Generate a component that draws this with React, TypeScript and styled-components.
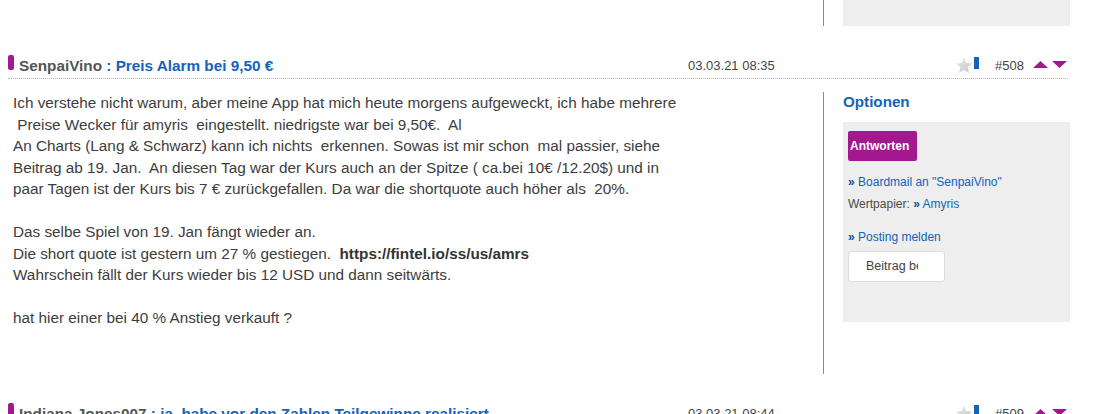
import styled, { createGlobalStyle } from "styled-components"

const GlobalStyle = createGlobalStyle`
    body {
        margin: 0;
        background: #fff;
        font-family: "Liberation Sans", Arial, sans-serif;
        color: #3a3a3a;
    }
`

const BLUE = '#1462b9'
const PURPLE = '#a3188f'

const Star = () => (
    <svg width="18" height="17" viewBox="0 0 17 16">
        <defs>
            <linearGradient id="starFill" x1="0" y1="0" x2="1" y2="1">
                <stop offset="0" stopColor="#ececec" />
                <stop offset="1" stopColor="#c4c4c4" />
            </linearGradient>
        </defs>
        <polygon
            points="8.5,0.5 10.6,5.6 16.2,6 11.9,9.6 13.3,15.2 8.5,12.2 3.7,15.2 5.1,9.6 0.8,6 6.4,5.6"
            fill="url(#starFill)"
        />
    </svg>
)

const Triangle = ({ down }: { down?: boolean }) => (
    <svg width="15" height="7" viewBox="0 0 15 7">
        <polygon points={down ? "0,0 15,0 7.5,7" : "0,7 15,7 7.5,0"} fill={PURPLE} />
    </svg>
)

type PostHeaderProps = {
    author: string
    subject: string
    date: string
    num: number
}

const PostHeader = ({ author, subject, date, num }: PostHeaderProps) => (
    <Header>
        <Title>
            <Marker />
            <Author>{author}</Author>
            <Subject>&nbsp;: {subject}</Subject>
        </Title>
        <DateCell>{date}</DateCell>
        <Tools>
            <StarWrap><Star /></StarWrap>
            <BlueBar />
            <PostNum>#{num}</PostNum>
            <Arrows>
                <Triangle />
                <Triangle down />
            </Arrows>
        </Tools>
    </Header>
)

const postText = `Ich verstehe nicht warum, aber meine App hat mich heute morgens aufgeweckt, ich habe mehrere
 Preise Wecker für amyris  eingestellt. niedrigste war bei 9,50€.  Al
An Charts (Lang & Schwarz) kann ich nichts  erkennen. Sowas ist mir schon  mal passier, siehe
Beitrag ab 19. Jan.  An diesen Tag war der Kurs auch an der Spitze ( ca.bei 10€ /12.20$) und in
paar Tagen ist der Kurs bis 7 € zurückgefallen. Da war die shortquote auch höher als  20%.

Das selbe Spiel von 19. Jan fängt wieder an.
Die short quote ist gestern um 27 % gestiegen.  `

const postTextEnd = `
Wahrschein fällt der Kurs wieder bis 12 USD und dann seitwärts.

hat hier einer bei 40 % Anstieg verkauft ?`

export default function App() {
    return (
        <>
            <GlobalStyle />
            <Page>
                <Body $tail>
                    <Main />
                    <Side>
                        <OptionsBox $tail />
                    </Side>
                </Body>

                <Post>
                    <PostHeader author="SenpaiVino" subject="Preis Alarm bei 9,50 €" date="03.03.21 08:35" num={508} />
                    <Body>
                        <Main>
                            {postText}
                            <strong>https://fintel.io/ss/us/amrs</strong>
                            {postTextEnd}
                        </Main>
                        <Side>
                            <SideTitle>Optionen</SideTitle>
                            <OptionsBox>
                                <ReplyButton>Antworten</ReplyButton>
                                <OptionLine $gap={13}>
                                    <Raquo>»</Raquo> <Link>Boardmail an "SenpaiVino"</Link>
                                </OptionLine>
                                <OptionLine $gap={6}>
                                    Wertpapier: <Raquo>»</Raquo> <Link>Amyris</Link>
                                </OptionLine>
                                <OptionLine $gap={17}>
                                    <Raquo>»</Raquo> <Link>Posting melden</Link>
                                </OptionLine>
                                <EditButton>
                                    <EditLabel>Beitrag bearbeiten</EditLabel>
                                </EditButton>
                            </OptionsBox>
                        </Side>
                    </Body>
                </Post>

                <Post>
                    <PostHeader author="Indiana Jones007" subject="ja, habe vor den Zahlen Teilgewinne realisiert" date="03.03.21 08:44" num={509} />
                    <Body>
                        <Main />
                        <Side />
                    </Body>
                </Post>
            </Page>
        </>
    )
}

export const Page = styled.div`
    width: 1062px;
    margin-left: 8px;
`
export const Post = styled.div`
    margin-top: 29px;
`
export const Header = styled.div`
    display: flex;
    align-items: flex-start;
    width: 1060px;
    height: 22px;
    line-height: 22px;
    padding-bottom: 1px;
    border-bottom: 1px dotted #b8b8b8;
`
export const Title = styled.div`
    display: flex;
    align-items: flex-start;
    width: 680px;
    font-size: 15.3px;
    font-weight: bold;
    white-space: nowrap;
    overflow: hidden;
`
export const Marker = styled.span`
    width: 6px;
    height: 15px;
    border-radius: 2px;
    background: ${PURPLE};
    margin-right: 5px;
`
export const Author = styled.span`
    color: #555;
`
export const Subject = styled.span`
    color: ${BLUE};
`
export const DateCell = styled.div`
    flex: 1;
    font-size: 13px;
    color: #444;
`
export const Tools = styled.div`
    display: flex;
    align-items: flex-start;
    height: 22px;
    font-size: 13px;
    line-height: 22px;
    color: #444;
    margin-right: 1px;
`
export const StarWrap = styled.span`
    display: flex;
    margin-top: 2px;
`
export const BlueBar = styled.span`
    width: 5px;
    height: 12px;
    margin: 2px 0 0 1px;
    background: ${BLUE};
`
export const PostNum = styled.span`
    margin-left: 16px;
`
export const Arrows = styled.span`
    display: flex;
    gap: 4px;
    margin: 6px 0 0 9px;
`
export const Body = styled.div<{ $tail?: boolean }>`
    display: flex;
    height: ${p => p.$tail ? 26 : 282}px;
    margin-top: ${p => p.$tail ? 0 : 13}px;
`
export const Main = styled.div`
    width: 810px;
    padding-left: 5px;
    font-size: 15.3px;
    line-height: 21.5px;
    white-space: pre-wrap;
    color: #3d3d3d;
    strong {
        color: #333;
    }
`
export const Side = styled.div`
    width: 227px;
    padding-left: 19px;
    border-left: 1px solid #8a8a8a;
`
export const SideTitle = styled.div`
    font-size: 15.2px;
    font-weight: bold;
    line-height: 20px;
    color: ${BLUE};
`
export const OptionsBox = styled.div<{ $tail?: boolean }>`
    display: flex;
    flex-direction: column;
    align-items: flex-start;
    box-sizing: border-box;
    height: ${p => p.$tail ? 26 : 200}px;
    margin-top: ${p => p.$tail ? 0 : 10}px;
    padding: 9px 5px;
    background: #eeeeee;
`
export const ReplyButton = styled.button`
    width: 69px;
    height: 30px;
    padding: 0 0 0 2px;
    border: 0;
    border-radius: 2px;
    background: ${PURPLE};
    color: #fff;
    font-family: "Liberation Sans", Arial, sans-serif;
    font-size: 12px;
    font-weight: bold;
    text-align: left;
`
export const OptionLine = styled.div<{ $gap: number }>`
    margin-top: ${p => p.$gap}px;
    font-size: 12px;
    line-height: 16px;
    color: #4a4a4a;
    white-space: nowrap;
`
export const Raquo = styled.span`
    font-weight: bold;
    color: #0d4d92;
`
export const Link = styled.span`
    color: ${BLUE};
`
export const EditButton = styled.div`
    box-sizing: border-box;
    width: 97px;
    height: 31px;
    margin-top: 6px;
    padding-left: 17px;
    border: 1px solid #dcdcdc;
    border-radius: 3px;
    background: #fff;
`
export const EditLabel = styled.span`
    display: block;
    width: 52px;
    overflow: hidden;
    white-space: nowrap;
    font-size: 12.5px;
    line-height: 29px;
    color: #444;
`
